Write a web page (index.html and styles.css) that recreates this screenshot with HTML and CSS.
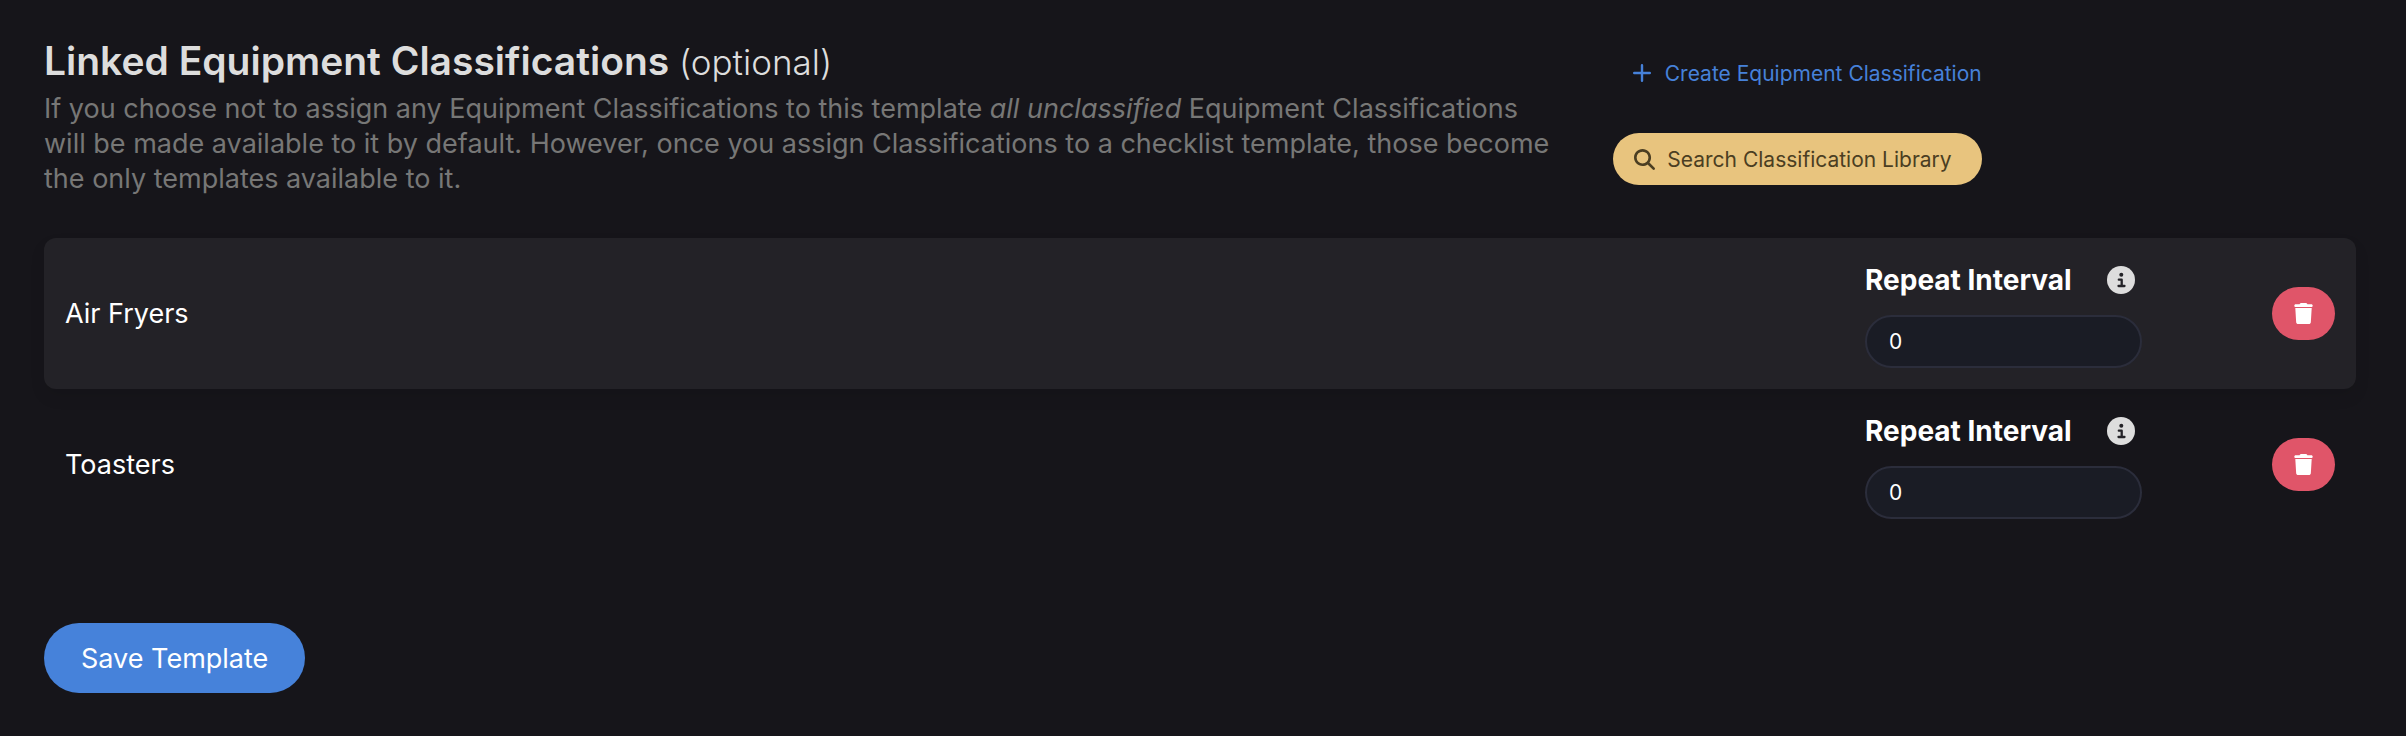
FILE: index.html
```html
<!DOCTYPE html>
<html lang="en">
<head>
<meta charset="utf-8">
<title>Linked Equipment Classifications</title>
<meta name="viewport" content="width=device-width, initial-scale=1">
<link rel="stylesheet" href="styles.css">
</head>
<body>
<svg class="sprite" aria-hidden="true">
  <symbol id="icon-plus" viewBox="0 0 18 18"><path d="M9 1.200v15.600M1.200 9h15.600" fill="none" stroke="currentColor" stroke-width="2.400" stroke-linecap="round"/></symbol>
  <symbol id="icon-search" viewBox="0 0 512 512"><path fill="currentColor" d="M416 208c0 45.900-14.900 88.300-40 122.700L502.600 457.400c12.500 12.500 12.500 32.800 0 45.300s-32.800 12.500-45.300 0L330.700 376c-34.400 25.200-76.800 40-122.700 40C93.100 416 0 322.900 0 208S93.100 0 208 0S416 93.100 416 208zM208 352a144 144 0 1 0 0-288 144 144 0 1 0 0 288z"/></symbol>
  <symbol id="icon-info" viewBox="0 0 28 28"><circle cx="14" cy="14" r="14" fill="#dddddd"/><circle class="info-mark" cx="14.300" cy="8.800" r="2"/><path class="info-stroke" d="M11.800 13.700h2.900v6M11.500 20h6" fill="none" stroke-width="2.300" stroke-linecap="round" stroke-linejoin="round"/></symbol>
  <symbol id="icon-trash" viewBox="0 0 448 512"><path fill="currentColor" d="M135.200 17.700L128 32H32C14.300 32 0 46.300 0 64S14.300 96 32 96H416c17.700 0 32-14.300 32-32s-14.300-32-32-32H320l-7.200-14.300C307.400 6.800 296.300 0 284.200 0H163.800c-12.100 0-23.200 6.800-28.600 17.700zM424 120H24L45.200 467c1.600 25.300 22.600 45 47.900 45H354.900c25.300 0 46.300-19.700 47.900-45L424 120z"/></symbol>
</svg>
<main class="page">
  <header class="intro">
    <div class="intro-text">
      <h1 class="title">Linked Equipment Classifications <span class="optional">(optional)</span></h1>
      <p class="help">If you choose not to assign any Equipment Classifications to this template <em>all unclassified</em> Equipment Classifications will be made available to it by default. However, once you assign Classifications to a checklist template, those become the only templates available to it.</p>
    </div>
    <div class="actions">
      <button class="btn btn-link" type="button"><svg class="icon-plus"><use href="#icon-plus"/></svg>Create Equipment Classification</button>
      <button class="btn btn-search" type="button"><svg class="icon-search"><use href="#icon-search"/></svg>Search Classification Library</button>
    </div>
  </header>
  <ul class="rows">
    <li class="row row-raised">
      <span class="name">Air Fryers</span>
      <div class="interval">
        <div class="interval-head"><label for="interval-1">Repeat Interval</label><svg class="icon-info" role="img" aria-label="Information"><use href="#icon-info"/></svg></div>
        <input class="field" id="interval-1" type="text" inputmode="numeric" value="0">
      </div>
      <button class="btn-delete" type="button" aria-label="Remove Air Fryers"><svg class="icon-trash"><use href="#icon-trash"/></svg></button>
    </li>
    <li class="row">
      <span class="name">Toasters</span>
      <div class="interval">
        <div class="interval-head"><label for="interval-2">Repeat Interval</label><svg class="icon-info" role="img" aria-label="Information"><use href="#icon-info"/></svg></div>
        <input class="field" id="interval-2" type="text" inputmode="numeric" value="0">
      </div>
      <button class="btn-delete" type="button" aria-label="Remove Toasters"><svg class="icon-trash"><use href="#icon-trash"/></svg></button>
    </li>
  </ul>
  <button class="btn-save" type="submit">Save Template</button>
</main>
</body>
</html>
```
FILE: styles.css
```css
* { box-sizing: border-box; }

body {
  margin: 0;
  background: #16151a;
  color: #fff;
  font: 27px/35px Inter, "Liberation Sans", sans-serif;
}

button, input { font-family: inherit; }
button { border: 0; cursor: pointer; }
.sprite { display: none; }

.page {
  padding: 36px 50px 44px 44px;
}

.intro {
  display: grid;
  grid-template-columns: 2fr 1fr;
  margin-bottom: 42px;
}
.intro-text { padding-right: 28px; }

.title {
  margin: 0;
  color: #dddddd;
  font-size: 39px;
  font-weight: 600;
  line-height: 50px;
}
.optional { font-size: 35px; font-weight: 300; }

.help {
  margin: 4px 0 0;
  color: #777776;
}

.actions {
  display: flex;
  flex-direction: column;
  align-items: flex-end;
  gap: 34px;
  width: fit-content;
  padding: 11px 0 0 28px;
}

.btn {
  display: flex;
  align-items: center;
  height: 52px;
  border-radius: 26px;
  font-size: 21px;
}
.btn-link {
  gap: 14px;
  padding: 0;
  background: none;
  color: #4681d9;
}
.btn-search {
  gap: 12px;
  padding: 0 30px 0 21px;
  background: #e8c47e;
  color: #4b3e22;
}
.icon-plus { width: 18px; height: 18px; }
.icon-search { width: 21px; height: 21px; }

.rows {
  margin: 0 0 83px;
  padding: 0;
  list-style: none;
}
.row {
  display: flex;
  align-items: center;
  padding: 21px;
  border-radius: 12px;
}
.row-raised {
  background: #232227;
  box-shadow: 0 8px 16px rgba(0, 0, 0, 0.08);
}
.name { flex: 1; }

.interval {
  width: 277px;
  margin-right: 130px;
}
.interval-head {
  display: flex;
  align-items: center;
  justify-content: space-between;
  height: 42px;
  margin-bottom: 14px;
  padding-right: 7px;
  font-size: 28px;
  font-weight: 700;
}
.icon-info { width: 28px; height: 28px; }
.info-mark { fill: #232227; }
.info-stroke { stroke: #232227; }

.field {
  display: block;
  width: 100%;
  height: 53px;
  padding: 0 22px;
  border: 2px solid #2b2d3b;
  border-radius: 27px;
  background: #1a1c25;
  color: #fff;
  font-size: 21px;
}

.btn-delete {
  display: grid;
  place-items: center;
  width: 63px;
  height: 53px;
  border-radius: 27px;
  background: #e05569;
  color: #fff;
}
.icon-trash { width: 19px; height: 21px; }

.btn-save {
  height: 70px;
  padding: 0 37px;
  border-radius: 35px;
  background: #4682da;
  color: #fff;
  font-size: 27px;
}
```
